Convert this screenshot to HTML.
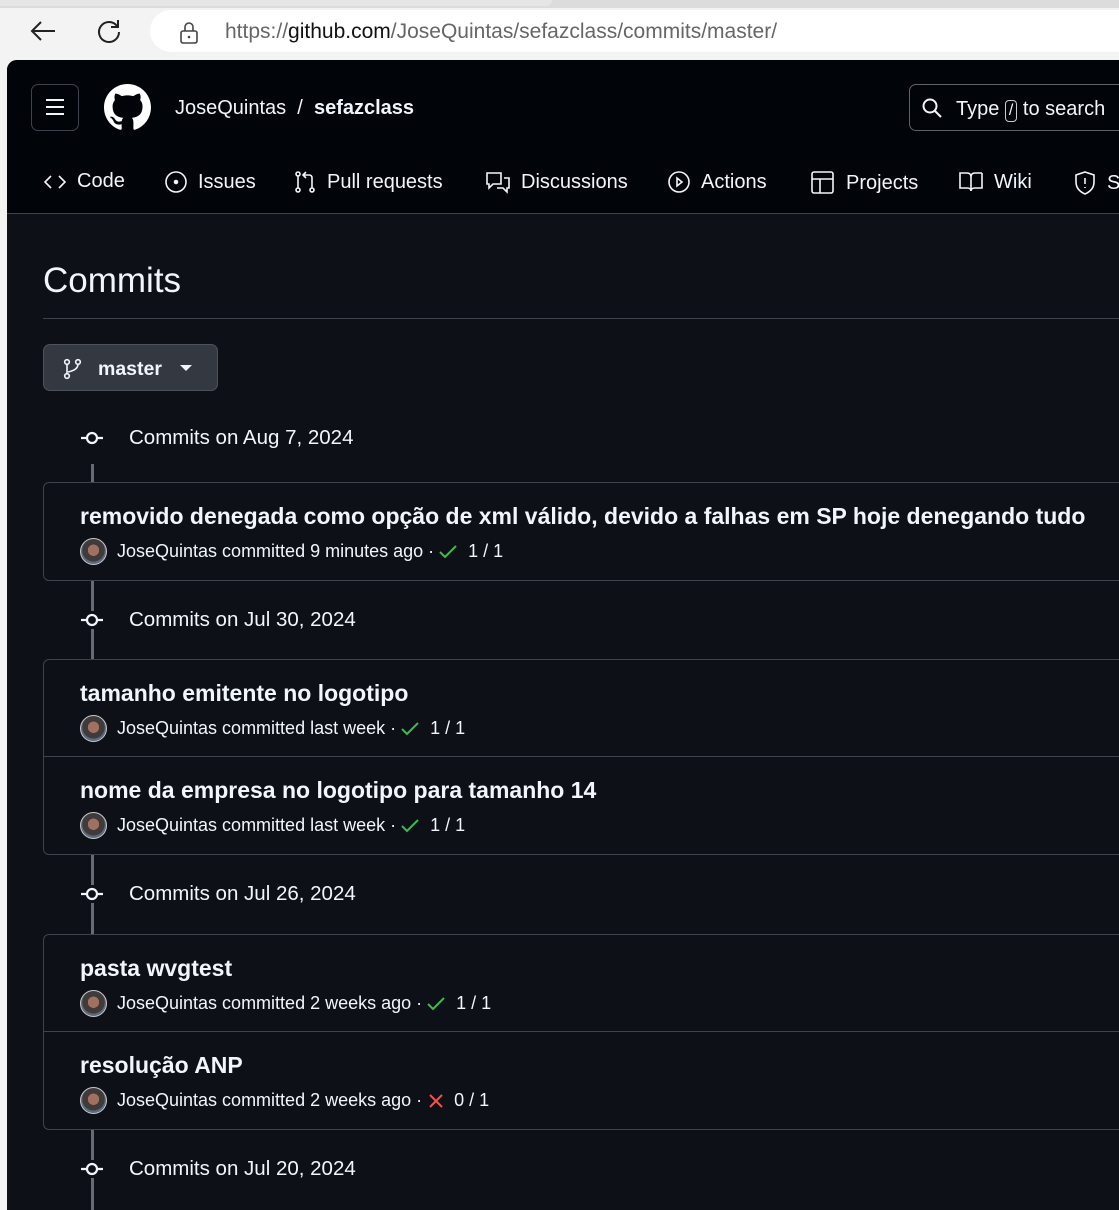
<!DOCTYPE html>
<html><head><meta charset="utf-8"><style>
*{margin:0;padding:0;box-sizing:border-box}
body{width:1119px;height:1204px;overflow:hidden;background:#f3f3f3;font-family:"Liberation Sans",sans-serif;position:relative}
.abs{position:absolute}
.page{position:absolute;left:7px;top:60px;width:1120px;height:1150px;background:#0d1017;border-top-left-radius:10px;overflow:hidden}
.hdr{position:absolute;left:0;top:0;width:100%;height:154px;background:#010409;border-bottom:1px solid #3d444d}
.w{color:#f0f6fc}
.nav{position:absolute;top:110px;font-size:20px;color:#f0f6fc;display:flex;align-items:center;gap:10px;white-space:nowrap}
.nav svg{fill:none;stroke:#f0f6fc;stroke-width:1.6}
.tl{position:absolute;left:84px;width:3px;background:#666c75}
.dh{position:absolute;left:73px;font-size:20.5px;color:#f0f6fc;display:flex;align-items:center;white-space:nowrap;z-index:2}
.dh svg{margin-right:25px}
.card{position:absolute;left:36px;width:1100px;border:1px solid #3d444d;border-radius:6px;background:#0d1017}
.row{height:97px;position:relative;border-bottom:1px solid #3d444d}
.row:last-child{border-bottom:none}
.t{position:absolute;left:36px;top:20px;font-size:23px;font-weight:bold;color:#f0f6fc;white-space:nowrap}
.m{position:absolute;left:36px;top:55px;font-size:18px;color:#f0f6fc;display:flex;align-items:center;white-space:nowrap}
.av{width:27px;height:27px;border-radius:50%;background:radial-gradient(circle at 50% 45%,#a07060 0 30%,#403a3a 31% 60%,#5a6a80 61%);border:1.5px solid #c8c8c8;margin-right:10px}
.ok{margin:0 10px 0 4px;display:inline-flex}
.x{margin:0 10px 0 6px;display:inline-flex}
</style></head><body>
<div class="abs" style="left:0;top:0;width:1119px;height:8px;background:#dcdcdc"></div>
<div class="abs" style="left:0;top:0;width:552px;height:6px;background:#e6e6e6;border-bottom-right-radius:6px"></div>
<svg class="abs" style="left:28px;top:18px" width="30" height="26" viewBox="0 0 30 26"><path d="M27 13H4M13 4L4 13L13 22" stroke="#222" stroke-width="2" fill="none"/></svg>
<svg class="abs" style="left:95px;top:17px" width="28" height="28" viewBox="0 0 28 28"><path d="M22 9A10 10 0 1 0 24 15" stroke="#222" stroke-width="2" fill="none"/><path d="M23 3V10H16" stroke="#222" stroke-width="2" fill="none"/></svg>
<div class="abs" style="left:150px;top:10px;width:1000px;height:42px;background:#fff;border-radius:21px"></div>
<svg class="abs" style="left:178px;top:21px" width="22" height="24" viewBox="0 0 22 24"><rect x="3" y="10" width="16" height="12" rx="2" stroke="#444" stroke-width="1.6" fill="none"/><path d="M7 10V6a4 4 0 0 1 8 0v4" stroke="#444" stroke-width="1.6" fill="none"/><circle cx="11" cy="16" r="1.3" fill="#444"/></svg>
<div class="abs" style="left:225px;top:20px;font-size:21px;color:#666;white-space:nowrap">https://<span style="color:#111">github.com</span>/JoseQuintas/sefazclass/commits/master/</div>

<div class="page">
<div class="hdr">
 <div class="abs" style="left:24px;top:24px;width:48px;height:47px;border:1px solid #3d444d;border-radius:7px"></div>
 <svg class="abs" style="left:37px;top:37px" width="22" height="20"><path d="M2 3H20M2 10H20M2 17H20" stroke="#f0f6fc" stroke-width="2"/></svg>
 <svg class="abs" style="left:97px;top:24px" width="47" height="47" viewBox="0 0 16 16"><path fill="#fff" d="M8 0C3.580 0 0 3.58 0 8c0 3.54 2.290 6.53 5.470 7.59.4.07.55-.17.55-.38 0-.19-.01-.82-.01-1.490-2.010.37-2.530-.49-2.690-.94-.09-.23-.48-.94-.82-1.130-.28-.15-.68-.52-.01-.53.63-.01 1.080.58 1.230.82.72 1.210 1.870.87 2.330.66.07-.52.28-.87.51-1.070-1.780-.2-3.640-.89-3.640-3.950 0-.87.31-1.590.82-2.150-.08-.2-.36-1.020.08-2.120 0 0 .67-.21 2.200.82.64-.18 1.320-.27 2-.27.68 0 1.360.09 2 .27 1.530-1.040 2.200-.82 2.200-.82.44 1.100.16 1.920.08 2.120.51.56.82 1.270.82 2.150 0 3.070-1.870 3.750-3.650 3.950.29.25.54.73.54 1.480 0 1.070-.01 1.930-.01 2.200 0 .21.15.46.55.38A8.013 8.013 0 0016 8c0-4.420-3.580-8-8-8z"/></svg>
 <div class="abs w" style="left:168px;top:37px;font-size:20px;white-space:nowrap">JoseQuintas&nbsp;&nbsp;/&nbsp;&nbsp;<b>sefazclass</b></div>
 <div class="abs" style="left:902px;top:24px;width:260px;height:47px;border:1px solid #5d636b;border-radius:7px"></div>
 <svg class="abs" style="left:914px;top:37px" width="22" height="22"><circle cx="9" cy="9" r="6.5" stroke="#f0f6fc" stroke-width="2" fill="none"/><path d="M14 14L20 20" stroke="#f0f6fc" stroke-width="2"/></svg>
 <div class="abs w" style="left:949px;top:38px;font-size:20px;white-space:nowrap">Type <span style="display:inline-block;border:1px solid #ccc;border-radius:4px;padding:0 3px;font-size:16px;line-height:20px">/</span> to search</div>

 <div class="nav" style="left:36px"><svg width="24" height="20"><path d="M8 4L2 10L8 16M16 4L22 10L16 16"/></svg>Code</div>
 <div class="nav" style="left:157px"><svg width="24" height="24"><circle cx="12" cy="12" r="10"/><circle cx="12" cy="12" r="1.5" fill="#f0f6fc"/></svg>Issues</div>
 <div class="nav" style="left:286px"><svg width="24" height="24"><circle cx="5" cy="4" r="2"/><circle cx="5" cy="20" r="2"/><circle cx="19" cy="20" r="2"/><path d="M5 6V18M19 18V8Q19 5 16 5H11M13 2L10 5L13 8"/></svg>Pull requests</div>
 <div class="nav" style="left:478px"><svg width="26" height="24"><path d="M2 3H16V14H8L4 18V14H2ZM19 8H24V18H22V22L18 18H12"/></svg>Discussions</div>
 <div class="nav" style="left:660px"><svg width="24" height="24"><circle cx="12" cy="12" r="10"/><path d="M10 8L15 12L10 16Z"/></svg>Actions</div>
 <div class="nav" style="left:803px"><svg width="26" height="26"><rect x="2" y="2" width="21" height="21" rx="2"/><path d="M2 9H23M10 9V23"/></svg>Projects</div>
 <div class="nav" style="left:951px"><svg width="26" height="24"><path d="M2 3H9Q13 3 13 7V21Q13 18 9 18H2ZM24 3H17Q13 3 13 7M24 3V18H17Q13 18 13 21"/></svg>Wiki</div>
 <div class="nav" style="left:1066px"><svg width="24" height="26"><path d="M12 2L21 5V12Q21 20 12 24Q3 20 3 12V5Z"/><path d="M12 8V14M12 17V18"/></svg>S</div>
</div>

<div class="abs w" style="left:36px;top:201px;font-size:35px">Commits</div>
<div class="abs" style="left:36px;top:258px;width:1100px;height:1px;background:#3d444d"></div>
<div class="abs" style="left:36px;top:284px;width:175px;height:47px;background:#343941;border:1px solid #4d535b;border-radius:7px"></div>
<svg class="abs" style="left:56px;top:298px" width="20" height="22"><circle cx="4" cy="4" r="2.3" stroke="#f0f6fc" stroke-width="1.6" fill="none"/><circle cx="4" cy="18" r="2.3" stroke="#f0f6fc" stroke-width="1.6" fill="none"/><circle cx="15" cy="4" r="2.3" stroke="#f0f6fc" stroke-width="1.6" fill="none"/><path d="M4 6V16M15 6Q15 12 5 14" stroke="#f0f6fc" stroke-width="1.6" fill="none"/></svg>
<div class="abs w" style="left:91px;top:298px;font-size:19.5px;font-weight:bold">master</div>
<svg class="abs" style="left:173px;top:305px" width="12" height="8"><path d="M0 0H12L6 6Z" fill="#f0f6fc"/></svg>

<div class="tl" style="top:404px;height:18px"></div>
<div class="tl" style="top:519px;height:80px"></div>
<div class="tl" style="top:793px;height:82px"></div>
<div class="tl" style="top:1068px;height:90px"></div>

<div class="dh" style="top:366px"><svg width="24" height="24"><rect x="3" y="3" width="18" height="18" fill="#0d1017"/><circle cx="12" cy="12" r="5" stroke="#f0f6fc" stroke-width="2.2" fill="#0d1017"/><path d="M1 12H7M17 12H23" stroke="#f0f6fc" stroke-width="2.2"/></svg>Commits on Aug 7, 2024</div>
<div class="dh" style="top:548px"><svg width="24" height="24"><rect x="3" y="3" width="18" height="18" fill="#0d1017"/><circle cx="12" cy="12" r="5" stroke="#f0f6fc" stroke-width="2.2" fill="#0d1017"/><path d="M1 12H7M17 12H23" stroke="#f0f6fc" stroke-width="2.2"/></svg>Commits on Jul 30, 2024</div>
<div class="dh" style="top:822px"><svg width="24" height="24"><rect x="3" y="3" width="18" height="18" fill="#0d1017"/><circle cx="12" cy="12" r="5" stroke="#f0f6fc" stroke-width="2.2" fill="#0d1017"/><path d="M1 12H7M17 12H23" stroke="#f0f6fc" stroke-width="2.2"/></svg>Commits on Jul 26, 2024</div>
<div class="dh" style="top:1097px"><svg width="24" height="24"><rect x="3" y="3" width="18" height="18" fill="#0d1017"/><circle cx="12" cy="12" r="5" stroke="#f0f6fc" stroke-width="2.2" fill="#0d1017"/><path d="M1 12H7M17 12H23" stroke="#f0f6fc" stroke-width="2.2"/></svg>Commits on Jul 20, 2024</div>

<div class="card" style="top:422px">
 <div class="row"><div class="t">removido denegada como opção de xml válido, devido a falhas em SP hoje denegando tudo</div><div class="m"><div class="av"></div>JoseQuintas committed 9 minutes ago ·<span class="ok"><svg width="20" height="16"><path d="M2 8L7 13L18 2" stroke="#3fb950" stroke-width="2" fill="none"/></svg></span>1 / 1</div></div>
</div>
<div class="card" style="top:599px">
 <div class="row"><div class="t">tamanho emitente no logotipo</div><div class="m"><div class="av"></div>JoseQuintas committed last week ·<span class="ok"><svg width="20" height="16"><path d="M2 8L7 13L18 2" stroke="#3fb950" stroke-width="2" fill="none"/></svg></span>1 / 1</div></div>
 <div class="row"><div class="t">nome da empresa no logotipo para tamanho 14</div><div class="m"><div class="av"></div>JoseQuintas committed last week ·<span class="ok"><svg width="20" height="16"><path d="M2 8L7 13L18 2" stroke="#3fb950" stroke-width="2" fill="none"/></svg></span>1 / 1</div></div>
</div>
<div class="card" style="top:874px">
 <div class="row"><div class="t">pasta wvgtest</div><div class="m"><div class="av"></div>JoseQuintas committed 2 weeks ago ·<span class="ok"><svg width="20" height="16"><path d="M2 8L7 13L18 2" stroke="#3fb950" stroke-width="2" fill="none"/></svg></span>1 / 1</div></div>
 <div class="row"><div class="t">resolução ANP</div><div class="m"><div class="av"></div>JoseQuintas committed 2 weeks ago ·<span class="x"><svg width="16" height="16"><path d="M2 2L14 14M14 2L2 14" stroke="#f85149" stroke-width="2"/></svg></span>0 / 1</div></div>
</div>
</div>
</body></html>
